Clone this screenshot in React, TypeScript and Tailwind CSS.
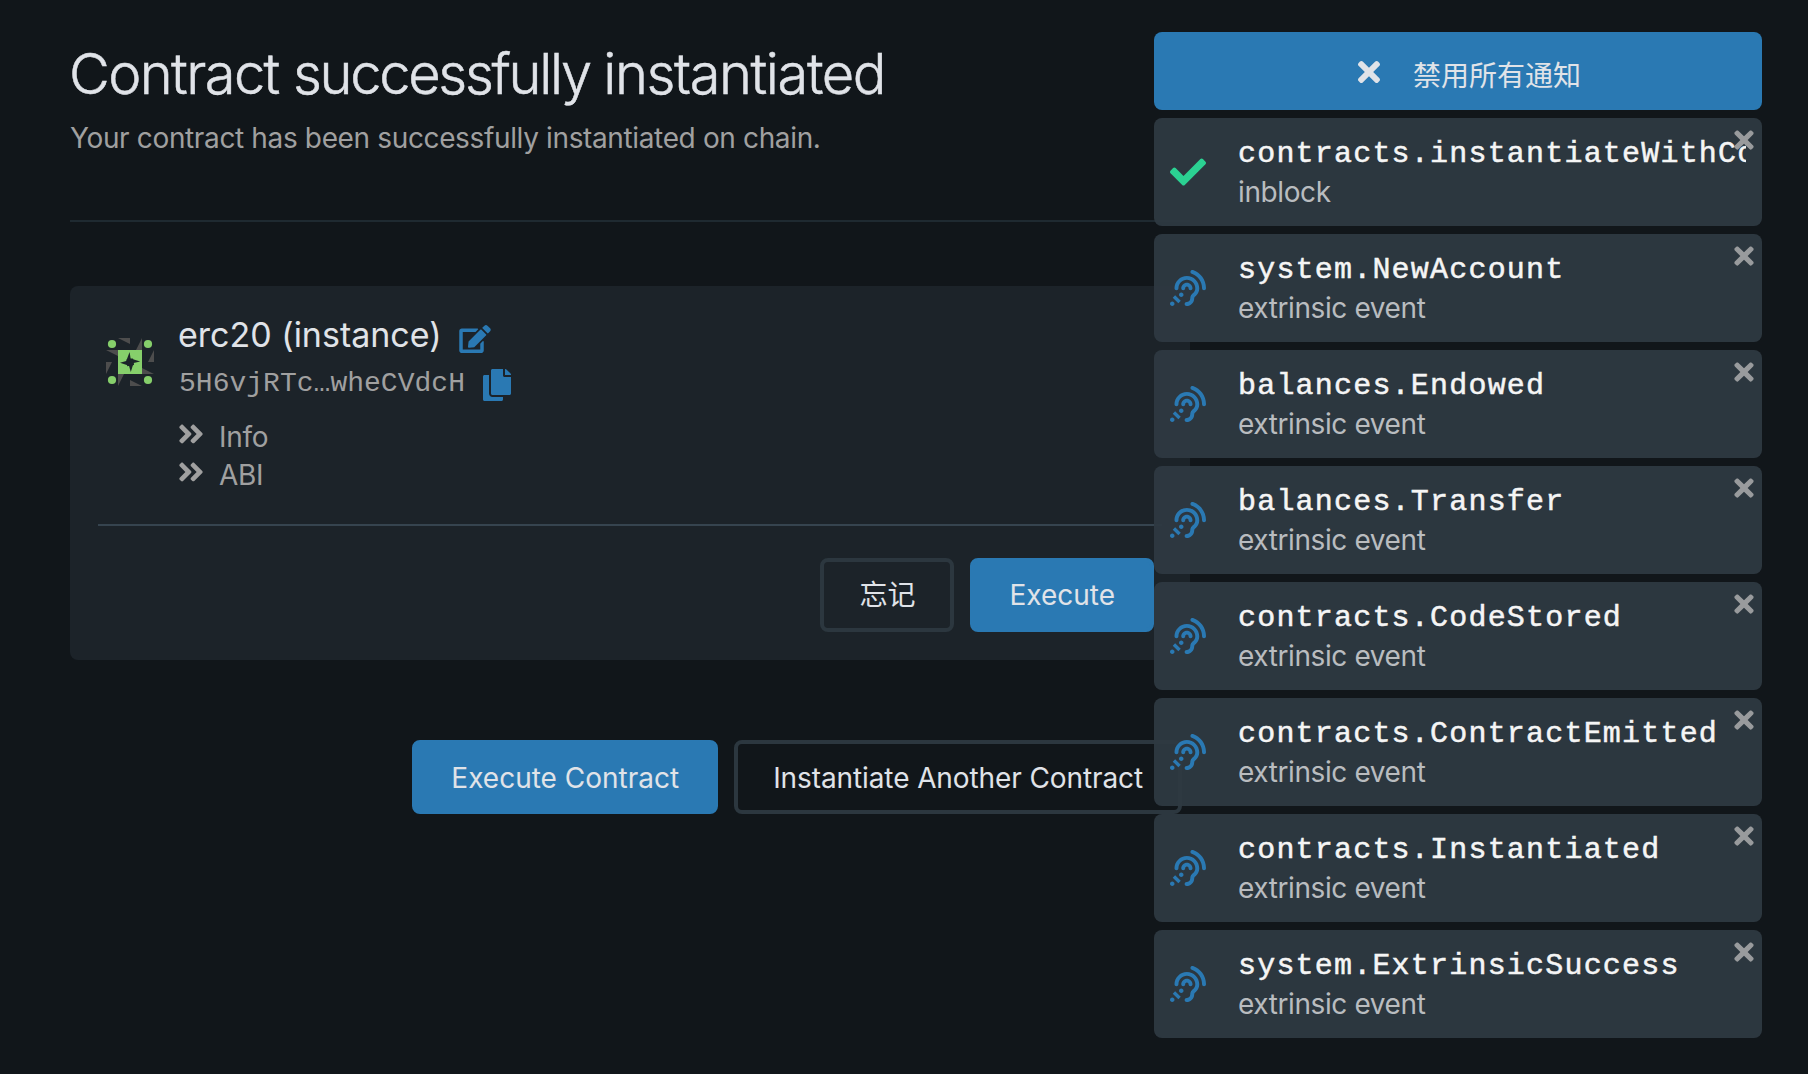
import type { ReactNode } from 'react';
import {
  FaAngleDoubleRight,
  FaAssistiveListeningSystems,
  FaCheck,
  FaCopy,
  FaEdit,
  FaTimes,
} from 'react-icons/fa';

type Toast = { title: string; status: string; done?: boolean };

const toasts: Toast[] = [
  { title: 'contracts.instantiateWithCode', status: 'inblock', done: true },
  { title: 'system.NewAccount', status: 'extrinsic event' },
  { title: 'balances.Endowed', status: 'extrinsic event' },
  { title: 'balances.Transfer', status: 'extrinsic event' },
  { title: 'contracts.CodeStored', status: 'extrinsic event' },
  { title: 'contracts.ContractEmitted', status: 'extrinsic event' },
  { title: 'contracts.Instantiated', status: 'extrinsic event' },
  { title: 'system.ExtrinsicSuccess', status: 'extrinsic event' },
];

function Button({
  primary,
  className = '',
  children,
}: {
  primary?: boolean;
  className?: string;
  children: ReactNode;
}) {
  return (
    <button
      className={`flex h-[74px] shrink-0 items-center justify-center whitespace-nowrap rounded-lg border-4 px-[35px] text-[28px] leading-9 text-[#e0e3e8] ${
        primary ? 'border-[#2a79b3] bg-[#2a79b3]' : 'border-[#2c373f]'
      } ${className}`}
    >
      {children}
    </button>
  );
}

function Identicon() {
  return (
    <svg width="48" height="48" viewBox="0 0 48 48" className="shrink-0">
      <path
        fill="#4d4d4d"
        d="M12 0H24V6ZM30 12L36 0V12ZM42 24L48 12V24ZM36 30L48 36H36ZM24 42L36 48H24ZM12 36H18L12 48ZM0 24H6L0 36ZM0 12H12V18Z"
      />
      <path fill="#86cf6b" d="M12 12H36V36H12Z" />
      <path fill="#1c2329" d="M23.6 14L24.6 20.6L34.2 23.4L27.6 25L24.8 34L23 27.8L14 24.8L20.2 23Z" />
      <path fill="#1c2329" d="M20.6 21.2L27 20.6L28 27L21.2 28.2Z" />
      <g fill="#86cf6b">
        <circle cx="6" cy="6" r="4.1" />
        <circle cx="42" cy="6" r="4.1" />
        <circle cx="6" cy="42" r="4.1" />
        <circle cx="42" cy="42" r="4.1" />
      </g>
    </svg>
  );
}

function Expander({ label }: { label: string }) {
  return (
    <div className="flex h-[38px] items-center text-[28px] leading-[38px] tracking-[-0.3px] text-[#a0a0a0]">
      <FaAngleDoubleRight className="-ml-[3px] mb-1 mr-[13px] size-[30px] shrink-0" />
      <span className="pt-px">{label}</span>
    </div>
  );
}

function ToastCard({ title, status, done }: Toast) {
  return (
    <div className="relative flex h-[108px] items-center rounded-lg bg-[#2e3941]/95 pl-4 pr-4">
      {done ? (
        <FaCheck className="size-9 shrink-0 text-[#2bd192]" />
      ) : (
        <FaAssistiveListeningSystems className="size-9 shrink-0 text-[#2a79b3]" />
      )}
      <div className="ml-8 min-w-0 flex-1 overflow-hidden pb-1">
        <div className="whitespace-nowrap font-['Liberation_Mono',monospace] text-[30px] leading-11 tracking-[1.2px] text-[#f5f5f5] [-webkit-text-stroke:0.5px_#f5f5f5]">
          {title}
        </div>
        <div className="text-[28px] leading-8 tracking-[-0.4px] text-[#b9bcbf]">{status}</div>
      </div>
      <FaTimes className="absolute right-1 top-2 size-7 text-[#999b9d]" />
    </div>
  );
}

export default function App() {
  return (
    <div className="relative h-[1074px] w-[1808px] overflow-hidden bg-[#11161a] font-['Inter','Noto_Sans_CJK_SC',sans-serif]">
      <main className="flex w-[1190px] flex-col pl-[70px] pt-[40px]">
        <h1 className="-ml-px text-[56px] font-light leading-[68px] tracking-[-1.6px] text-[#e0e3e8] [-webkit-text-stroke:0.5px_#e0e3e8]">
          Contract <span className="tracking-[-2.3px]">successfully </span>
          <span className="tracking-[-1.4px]">instantiated</span>
        </h1>
        <p className="mt-3 text-[28px] leading-9 tracking-[-0.36px] text-[#a0a0a0]">
          Your contract has been successfully instantiated on chain.
        </p>
        <hr className="mt-16 border-t-2 border-[#1f2a31]" />

        <section className="mt-16 flex h-[374px] flex-col rounded-lg bg-[#1c2329] px-7 pt-7">
          <div className="flex h-[210px] pl-2">
            <div className="mt-6">
              <Identicon />
            </div>
            <div className="ml-[25px]">
              <div className="-mt-px -ml-px flex h-[42px] items-center text-[34px] leading-[42px] text-[#e0e3e8]">
                <span className="pt-px">erc20 (instance)</span>
                <FaEdit className="ml-[17px] mt-2.5 h-7 w-8 text-[#2a79b3]" />
              </div>
              <div className="mt-1.5 flex h-[46px] items-center font-['Liberation_Mono',monospace] text-[28px] leading-9 tracking-[0.02px] text-[#a0a0a0]">
                <span>5H6vjRTc…wheCVdcH</span>
                <FaCopy className="ml-[18px] mt-0.5 h-8 w-7 text-[#2a79b3]" />
              </div>
              <div className="mt-2.5">
                <Expander label="Info" />
                <Expander label="ABI" />
              </div>
            </div>
          </div>
          <div className="flex justify-end gap-4 border-t-2 border-[#36444f] pr-2 pt-8">
            <Button>忘记</Button>
            <Button primary>Execute</Button>
          </div>
        </section>

        <div className="mt-20 flex justify-end gap-4 pr-2">
          <Button primary className="pt-0.5">
            Execute Contract
          </Button>
          <Button className="pt-0.5 tracking-[-0.1px]">Instantiate Another Contract</Button>
        </div>
      </main>

      <aside className="absolute left-[1154px] top-8 flex w-[608px] flex-col gap-2">
        <button className="flex h-[78px] items-center justify-center rounded-lg bg-[#2a79b3] pl-[18px] pt-0.5 text-[28px] leading-9 text-[#e0e3e8]">
          <FaTimes className="mr-[28px] size-8" />
          <span className="pt-2">禁用所有通知</span>
        </button>
        {toasts.map((toast) => (
          <ToastCard key={toast.title} {...toast} />
        ))}
      </aside>
    </div>
  );
}
